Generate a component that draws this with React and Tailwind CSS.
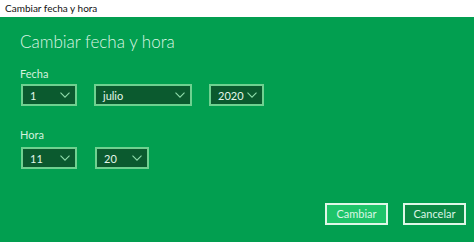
import React from "react";

function Chevron() {
  return (
    <svg width="10" height="6" viewBox="0 0 10 6" fill="none" className="shrink-0">
      <path d="M0.5 0.7 L5 5.2 L9.5 0.7" stroke="#8fdcab" strokeWidth="1.1" />
    </svg>
  );
}

function Select({ value, width }) {
  return (
    <div
      className={`flex items-center justify-between h-[22px] pl-[7px] pr-[5px] bg-[#0b5a2f] border-2 border-[#6fd190] text-[#e4f7ea] text-[11px] ${width}`}
    >
      <span className="leading-none">{value}</span>
      <Chevron />
    </div>
  );
}

export default function App() {
  return (
    <div className="w-[474px] h-[242px] flex flex-col font-['Lato',sans-serif]">
      <div className="h-[17px] bg-white flex items-center pl-[5px] text-[10px] text-[#111]">
        Cambiar fecha y hora
      </div>
      <div className="flex-1 bg-[#029f50] flex flex-col pl-[20px] pr-[8px]">
        <h1 className="mt-[13px] text-[17px] font-light text-[#dcf5e4] leading-[24px]">
          Cambiar fecha y hora
        </h1>
        <div className="mt-[13px] text-[11px] text-[#d6f2df] leading-[14px]">Fecha</div>
        <div className="mt-[3px] flex gap-[17px] ml-[1px]">
          <Select value="1" width="w-[56px]" />
          <Select value="julio" width="w-[98px]" />
          <Select value="2020" width="w-[55px]" />
        </div>
        <div className="mt-[22px] text-[11px] text-[#d6f2df] leading-[14px]">Hora</div>
        <div className="mt-[5px] flex gap-[18px] ml-[1px]">
          <Select value="11" width="w-[56px]" />
          <Select value="20" width="w-[54px]" />
        </div>
        <div className="mt-auto mb-[17px] flex justify-end gap-[15px]">
          <button className="w-[63px] h-[22px] bg-[#1ec46a] border-2 border-[#dff7e7] text-[#dcf7e5] text-[11px]">
            Cambiar
          </button>
          <button className="w-[63px] h-[22px] bg-[#0b8a45] border-2 border-[#dff7e7] text-[#dcf7e5] text-[11px]">
            Cancelar
          </button>
        </div>
      </div>
    </div>
  );
}
